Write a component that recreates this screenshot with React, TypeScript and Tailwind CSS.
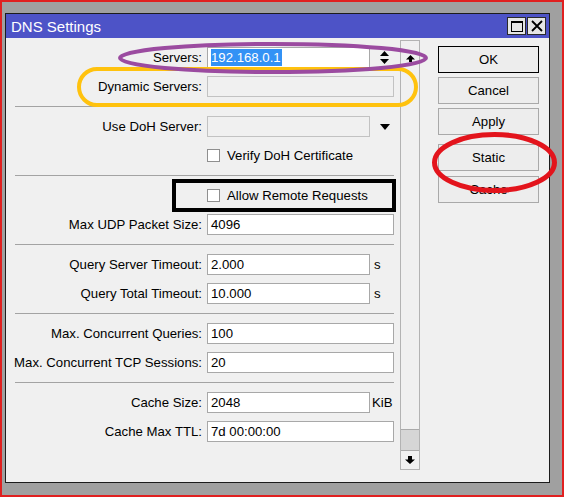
import type { ReactNode } from 'react'

const Row = ({ label, children }: { label?: string; children: ReactNode }) => (
  <div className="flex h-[21px] items-center">
    <span className="w-[196px] shrink-0 text-right leading-none">{label}</span>
    <div className="ml-[5px] flex h-full items-center">{children}</div>
  </div>
)

const Field = ({ value, short, disabled, selected }: { value?: string; short?: boolean; disabled?: boolean; selected?: boolean }) => (
  <div
    className={`flex h-[21px] items-center border pl-[3px] leading-none ${short ? 'w-[163px]' : 'w-[187px]'} ${
      disabled ? 'border-[#c2c2c2] bg-[#f0f0f0]' : 'border-[#a8a8a8] bg-white'
    }`}
  >
    {selected ? <span className="bg-[#3392f5] py-[2px] pr-[1px] text-white">{value}</span> : value}
  </div>
)

const Check = ({ label }: { label: string }) => (
  <div className="flex items-center">
    <div className="h-[13px] w-[13px] border border-[#8f8f8f] bg-white" />
    <span className="ml-[7px] leading-none">{label}</span>
  </div>
)

const Sep = () => (
  <div className="flex h-[3px] items-center">
    <div className="ml-[9px] h-px w-[379px] bg-[#a3a3a3]" />
  </div>
)

const Btn = ({ label, primary, className = '' }: { label: string; primary?: boolean; className?: string }) => (
  <div
    className={`flex h-[27px] w-[101px] items-center justify-center border bg-[#ededed] ${
      primary ? 'border-black' : 'border-[#a9a9a9]'
    } ${className}`}
  >
    {label}
  </div>
)

const TriDown = () => (
  <svg width="10" height="6" viewBox="0 0 10 6">
    <polygon points="0,0 10,0 5,6" fill="#000" />
  </svg>
)

export default function App() {
  return (
    <div className="relative h-[497px] w-[564px] font-['Liberation_Sans',Arial,sans-serif] text-[13.2px] text-black">
      <div className="h-full w-full border-2 border-[#e02020] bg-[#a0a0a0] pl-[3px] pt-[11px]">
        {/* window */}
        <div className="flex h-[470px] w-[545px] flex-col border border-[#1c1c1c] bg-[#f0f0f0]">
          <div className="flex h-[24px] shrink-0 items-center bg-[#4d53c7] pl-[5px] pr-[3px]">
            <span className="pt-[2px] text-[15px] text-white">DNS Settings</span>
            <div className="ml-auto flex">
              <div className="flex h-[18px] w-[19px] items-center justify-center border border-[#2a2a2a] bg-[#e6e6e6]">
                <div className="h-[11px] w-[12px] border border-t-2 border-black" />
              </div>
              <div className="ml-px flex h-[18px] w-[19px] items-center justify-center border border-[#2a2a2a] bg-[#e6e6e6]">
                <svg width="12" height="12" viewBox="0 0 12 12">
                  <path d="M1 1 L11 11 M11 1 L1 11" stroke="#000" strokeWidth="1.8" />
                </svg>
              </div>
            </div>
          </div>

          <div className="flex flex-1">
            {/* form */}
            <div className="flex w-[394px] shrink-0 flex-col gap-[8px] pt-[9px]">
              <Row label="Servers:">
                <Field value="192.168.0.1" short selected />
                <svg className="ml-[10px]" width="9" height="13" viewBox="0 0 9 13">
                  <polygon points="4.5,0 9,5 0,5" fill="#000" />
                  <polygon points="0,8 9,8 4.5,13" fill="#000" />
                </svg>
              </Row>
              <Row label="Dynamic Servers:">
                <Field disabled />
              </Row>
              <Sep />
              <Row label="Use DoH Server:">
                <Field short disabled />
                <span className="ml-[10px]">
                  <TriDown />
                </span>
              </Row>
              <Row>
                <Check label="Verify DoH Certificate" />
              </Row>
              <Sep />
              <Row>
                <Check label="Allow Remote Requests" />
              </Row>
              <Row label="Max UDP Packet Size:">
                <Field value="4096" />
              </Row>
              <Sep />
              <Row label="Query Server Timeout:">
                <Field value="2.000" short />
                <span className="ml-[4px]">s</span>
              </Row>
              <Row label="Query Total Timeout:">
                <Field value="10.000" short />
                <span className="ml-[4px]">s</span>
              </Row>
              <Sep />
              <Row label="Max. Concurrent Queries:">
                <Field value="100" />
              </Row>
              <Row label="Max. Concurrent TCP Sessions:">
                <Field value="20" />
              </Row>
              <Sep />
              <Row label="Cache Size:">
                <Field value="2048" short />
                <span className="ml-[2px]">KiB</span>
              </Row>
              <Row label="Cache Max TTL:">
                <Field value="7d 00:00:00" />
              </Row>
            </div>

            {/* scrollbar */}
            <div className="mt-[2px] flex h-[430px] w-[20px] shrink-0 flex-col border border-[#b3b3b3]">
              <div className="mt-[8px] flex h-[18px] items-center justify-center">
                <svg width="9" height="7" viewBox="0 0 9 7">
                  <polygon points="4.5,0 9,4.5 6,4.5 6,7 3,7 3,4.5 0,4.5" fill="#000" />
                </svg>
              </div>
              <div className="flex-1" />
              <div className="h-[22px] border-y border-[#a9a9a9] bg-[#d6d6d6]" />
              <div className="flex h-[18px] items-center justify-center">
                <svg width="10" height="8" viewBox="0 0 10 8">
                  <polygon points="3,0 7,0 7,3.5 10,3.5 5,8 0,3.5 3,3.5" fill="#000" />
                </svg>
              </div>
            </div>

            {/* buttons */}
            <div className="ml-[18px] flex flex-col pt-[8px]">
              <Btn label="OK" primary />
              <Btn label="Cancel" className="mt-[4px]" />
              <Btn label="Apply" className="mt-[4px]" />
              <Btn label="Static" className="mt-[9px]" />
              <Btn label="Cache" className="mt-[5px]" />
            </div>
          </div>
        </div>
      </div>

      {/* annotations drawn over the screenshot */}
      <svg className="pointer-events-none absolute left-0 top-0" width="564" height="497" viewBox="0 0 564 497">
        <rect x="79" y="69" width="337" height="36" rx="18" fill="none" stroke="#ffc20e" strokeWidth="4" />
        <ellipse cx="273" cy="58" rx="153" ry="14" fill="none" stroke="#9b4ba0" strokeWidth="4" />
        <rect x="174" y="181" width="220" height="29" fill="none" stroke="#000" strokeWidth="4" />
        <ellipse cx="494.5" cy="162.5" rx="60" ry="28" fill="none" stroke="#e3141c" strokeWidth="5" />
      </svg>
    </div>
  )
}
